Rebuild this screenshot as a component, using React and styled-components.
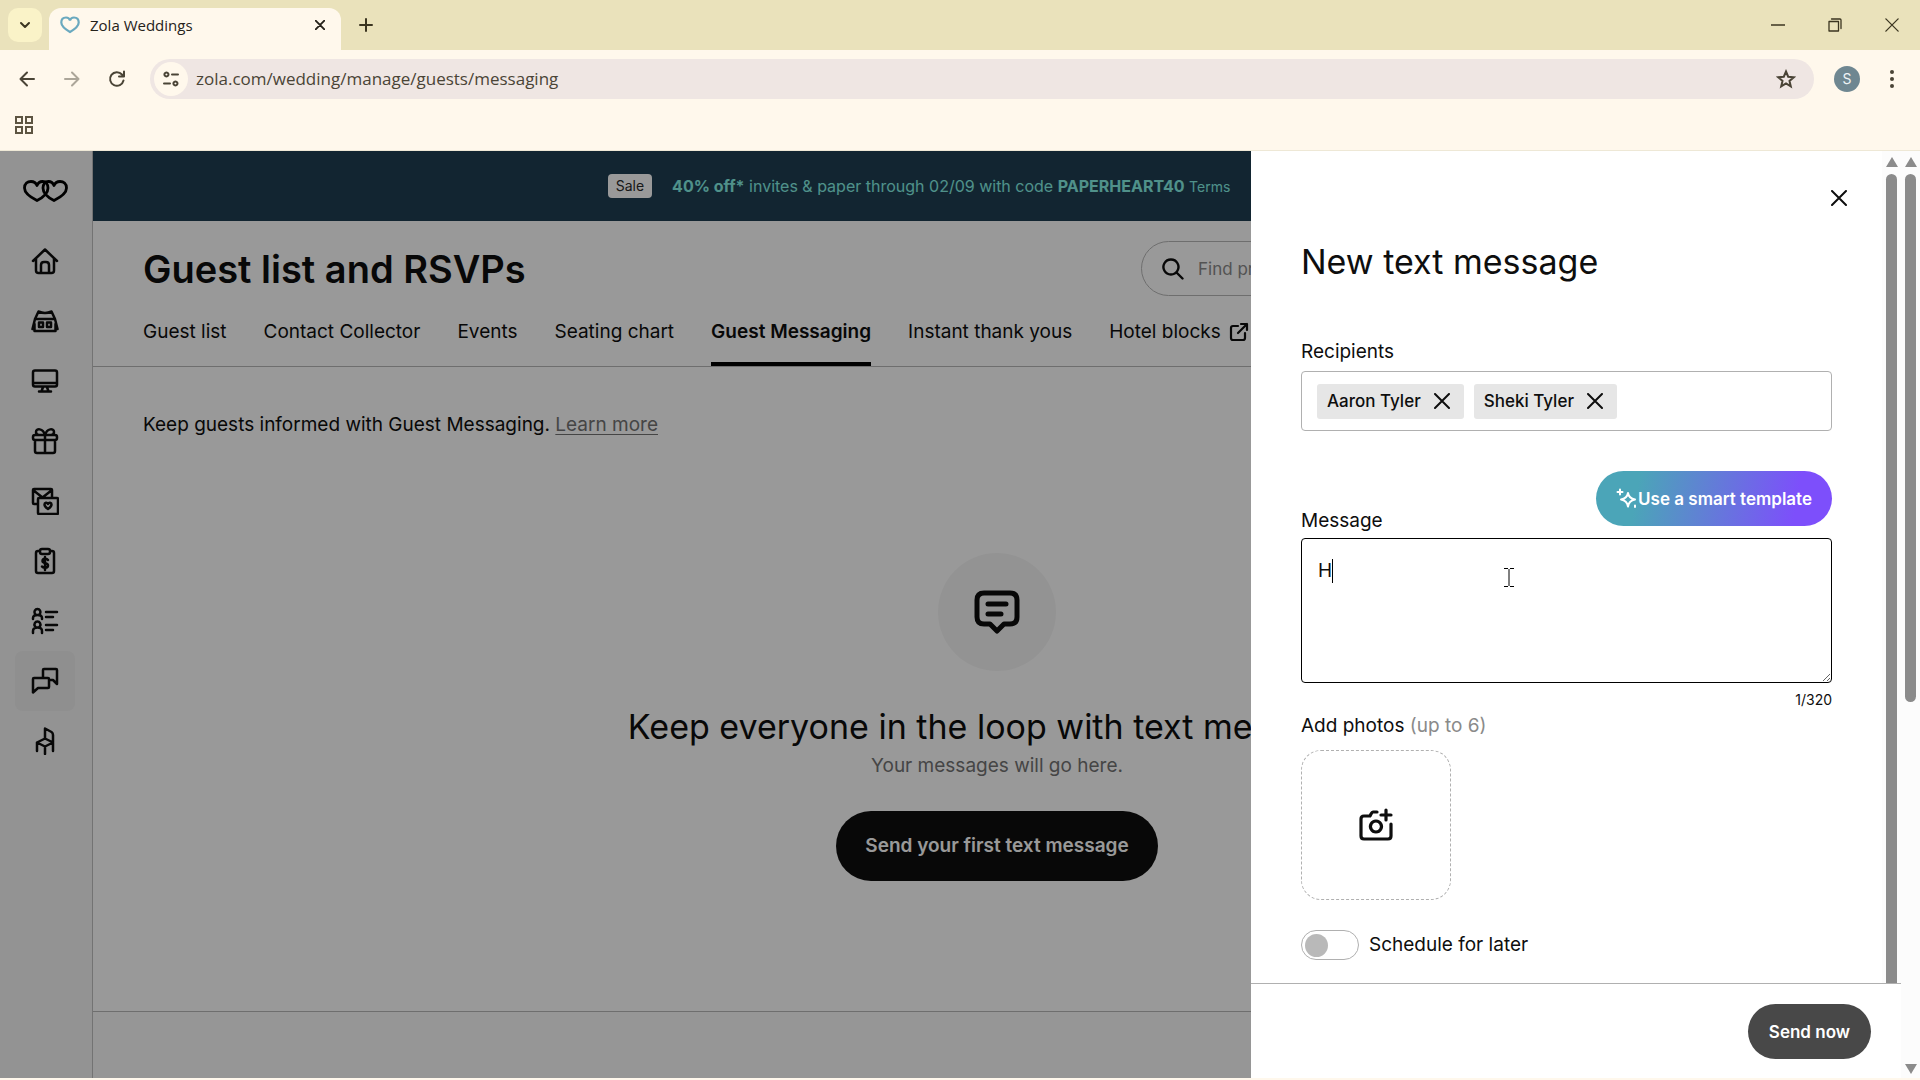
import React, { useState } from "react";
import styled, { createGlobalStyle, css } from "styled-components";

const GlobalStyle = createGlobalStyle`
  * {
    box-sizing: border-box;
  }
  body {
    margin: 0;
    color: #0e0e0e;
    font-family: Inter, "Liberation Sans", sans-serif;
    font-size: 19px;
    line-height: 28px;
  }
  button, input, textarea {
    font: inherit;
    color: inherit;
  }
  button {
    border: 0;
    padding: 0;
    background: none;
    cursor: pointer;
  }
  a {
    color: inherit;
    text-decoration: none;
  }
  h1, h2, p {
    margin: 0;
  }
  svg {
    display: block;
    flex: none;
  }
`;

/* Browser window */

const Window = styled.div`
  display: flex;
  flex-direction: column;
  height: 100vh;
  padding-bottom: 2px;
  background: #fff8ec;
  overflow: hidden;
`;

const TabStrip = styled.header`
  display: flex;
  align-items: flex-end;
  height: 50px;
  padding-left: 8px;
  background: #eae2bb;
  color: #3b3520;
`;

const TabSearch = styled.button`
  display: grid;
  place-items: center;
  width: 34px;
  height: 34px;
  margin: 0 7px 8px 0;
  border-radius: 10px;
  background: #faf3c8;
`;

const Tab = styled.div`
  display: flex;
  align-items: center;
  gap: 10px;
  width: 292px;
  height: 42px;
  padding: 0 16px 8px 11px;
  border-radius: 12px 12px 0 0;
  background: #fff8ec;
  color: #25221a;
  font-family: "Open Sans", sans-serif;
  font-size: 15px;
  line-height: 20px;

  span {
    flex: 1;
  }
`;

const NewTab = styled.button`
  display: grid;
  place-items: center;
  width: 34px;
  height: 50px;
  margin-left: 8px;
`;

const WindowControls = styled.div`
  display: flex;
  height: 50px;
  margin-left: auto;

  button {
    display: grid;
    place-items: center;
    width: 57px;
    height: 50px;
  }
`;

const Toolbar = styled.div`
  display: flex;
  align-items: center;
  height: 58px;
  padding: 0 14px 0 13px;
  color: #4a4436;
`;

const ToolButton = styled.button`
  display: grid;
  place-items: center;
  width: 28px;
  height: 28px;
  margin-right: 17px;
  opacity: ${(props) => (props.disabled ? 0.45 : 1)};
`;

const AddressBar = styled.div`
  display: flex;
  align-items: center;
  flex: 1;
  height: 40px;
  margin: 0 20px 0 2px;
  padding: 0 18px 0 4px;
  border-radius: 20px;
  background: #efe6e3;

  input {
    flex: 1;
    margin-left: 8px;
    padding: 0;
    border: 0;
    outline: 0;
    background: none;
    font-family: "Open Sans", sans-serif;
    font-size: 17px;
    line-height: 24px;
  }
`;

const SiteInfo = styled.button`
  display: grid;
  place-items: center;
  width: 34px;
  height: 34px;
  border-radius: 50%;
  background: #fff8ec;
`;

const Avatar = styled.button`
  width: 26px;
  height: 26px;
  margin-right: 18px;
  border-radius: 50%;
  background: #6f8791;
  color: #eef3f5;
  font-size: 14px;
  line-height: 26px;
`;

const Bookmarks = styled.div`
  display: flex;
  align-items: center;
  height: 43px;
  padding: 0 14px 8px;
  border-bottom: 1px solid #eee8d6;
  color: #5d5542;
`;

const Viewport = styled.div`
  position: relative;
  display: flex;
  flex: 1;
  min-height: 0;
  background: #fff;
`;

/* Scrollbar */

const ScrollTrack = styled.div`
  display: flex;
  flex-direction: column;
  align-items: center;
  width: 19px;
  background: #fcfcfc;
`;

const ScrollArrow = styled.div`
  margin: ${(props) => (props.$down ? "auto 0 4px" : "6px 0 7px")};
  border: 6px solid transparent;
  border-top: ${(props) => (props.$down ? "10px solid #8b8b8b" : "0")};
  border-bottom: ${(props) => (props.$down ? "0" : "10px solid #8b8b8b")};
`;

const ScrollThumb = styled.div`
  width: 11px;
  flex: ${(props) => (props.$full ? "1" : "0 1 57%")};
  border-radius: ${(props) => (props.$full ? "6px 6px 0 0" : "6px")};
  background: #8b8b8b;
`;

/* Page */

const Page = styled.div`
  position: relative;
  display: flex;
  flex: 1;
  min-width: 0;
`;

const Sidebar = styled.nav`
  display: flex;
  flex-direction: column;
  align-items: center;
  width: 93px;
  padding: 28px 2px 0 0;
  border-right: 1px solid #c0c0c0;
  background: #f5f5f5;
`;

const LogoLink = styled.a`
  margin-bottom: 28px;
`;

const SideLink = styled.a`
  display: grid;
  place-items: center;
  width: 60px;
  height: 60px;
  border-radius: 8px;
  background: ${(props) => (props.$active ? "#eeeeee" : "none")};
`;

const Main = styled.main`
  display: flex;
  flex-direction: column;
  flex: 1;
  min-width: 0;
  background: #fff;
`;

const Banner = styled.div`
  display: flex;
  align-items: center;
  justify-content: center;
  gap: 20px;
  height: 70px;
  padding-right: 156px;
  background: #1e3e52;
  color: #86f2e6;
  font-size: 16px;
  line-height: 24px;
  white-space: nowrap;

  a {
    font-size: 14px;
  }
`;

const SaleTag = styled.span`
  padding: 0 8px;
  border-radius: 4px;
  background: #fff;
  color: #2a2a2a;
  font-size: 14px;
`;

const PageHeader = styled.div`
  display: flex;
  align-items: center;
  justify-content: space-between;
  padding: 20px 50px 0;
`;

const PageTitle = styled.h1`
  font-size: 38px;
  font-weight: 600;
  line-height: 54px;
  white-space: nowrap;
`;

const SearchBox = styled.label`
  display: flex;
  align-items: center;
  gap: 14px;
  flex: 0 1 710px;
  height: 55px;
  padding: 0 20px;
  border: 1px solid #b8b8b8;
  border-radius: 28px;

  input {
    flex: 1;
    min-width: 0;
    padding: 0;
    border: 0;
    background: none;
    font-size: 17px;
  }
  input::placeholder {
    color: #8a8a8a;
    opacity: 1;
  }
`;

const SubNav = styled.nav`
  display: flex;
  gap: 37px;
  padding: 0 50px;
  border-bottom: 1px solid #b8b8b8;
  white-space: nowrap;
`;

const SubNavLink = styled.a`
  display: flex;
  align-items: center;
  gap: 8px;
  height: 70px;
  padding-top: 6px;
  border-bottom: 4px solid transparent;
  ${(props) =>
    props.$active &&
    css`
      border-color: #000;
      font-weight: 600;
    `}
`;

const Intro = styled.p`
  padding: 44px 50px 0;

  a {
    color: #747474;
    text-decoration: underline;
    text-underline-offset: 3px;
  }
`;

const EmptyState = styled.section`
  display: flex;
  flex-direction: column;
  align-items: center;
  flex: 1;
  padding-top: 114px;
  text-align: center;

  h2 {
    margin-top: 31px;
    font-size: 34px;
    font-weight: 400;
    line-height: 50px;
    white-space: nowrap;
  }
  p {
    color: #747474;
  }
`;

const EmptyIcon = styled.div`
  display: grid;
  place-items: center;
  width: 118px;
  height: 118px;
  border-radius: 50%;
  background: #f6f6f6;
`;

const FirstMessageButton = styled.button`
  height: 70px;
  margin-top: 31px;
  padding: 0 29px;
  border-radius: 35px;
  background: #0e0e0e;
  color: #fff;
  font-weight: 600;
`;

const PageFooter = styled.footer`
  height: 67px;
  border-top: 1px solid #b8b8b8;
  background: #fafafa;
`;

const Backdrop = styled.div`
  position: absolute;
  inset: 0;
  background: rgba(0, 0, 0, 0.4);
`;

/* Drawer */

const Drawer = styled.aside`
  position: absolute;
  top: 0;
  right: 0;
  bottom: 0;
  display: flex;
  flex-direction: column;
  width: 650px;
  max-width: 100%;
  background: #fff;
`;

const DrawerScroll = styled.div`
  display: flex;
  flex: 1;
  min-height: 0;
`;

const Form = styled.form`
  display: flex;
  flex-direction: column;
  flex: 1;
  min-width: 0;
  padding: 33px 50px 0;
  overflow: hidden;

  h2 {
    margin: 30px 0 56px;
    font-size: 34px;
    font-weight: 400;
    line-height: 40px;
  }
`;

const CloseButton = styled.button`
  display: grid;
  place-items: center;
  align-self: flex-end;
  width: 30px;
  height: 28px;
  margin-right: -22px;
`;

const Label = styled.label`
  line-height: 28px;

  span {
    color: #8a8a8a;
  }
`;

const RecipientField = styled.div`
  display: flex;
  align-items: center;
  gap: 10px;
  height: 60px;
  margin-top: 5px;
  padding: 0 15px;
  border: 1px solid #b0b0b0;
  border-radius: 4px;

  input {
    flex: 1;
    min-width: 0;
    border: 0;
    outline: 0;
  }
`;

const Chip = styled.span`
  display: flex;
  align-items: center;
  gap: 13px;
  height: 35px;
  padding: 0 14px 0 10px;
  border-radius: 3px;
  background: #e6e6e6;
  font-size: 17px;
  font-weight: 500;
  white-space: nowrap;
`;

const MessageHead = styled.div`
  display: flex;
  align-items: flex-end;
  justify-content: space-between;
  margin-top: 40px;

  ${Label} {
    margin-bottom: -9px;
  }
`;

const TemplateButton = styled.button`
  display: flex;
  align-items: center;
  gap: 1px;
  height: 55px;
  padding: 0 20px;
  border-radius: 28px;
  background: linear-gradient(100deg, #4ba5b8 18%, #7d4ffb 84%);
  color: #fff;
  font-size: 17px;
  font-weight: 600;
`;

const MessageField = styled.div`
  position: relative;
  display: flex;
  margin-top: 12px;

  textarea {
    width: 100%;
    height: 145px;
    padding: 18px 16px;
    border: 1px solid #000;
    border-radius: 4px;
    outline: 0;
    caret-color: transparent;
    resize: vertical;
  }
`;

const Caret = styled.span`
  position: absolute;
  top: 21px;
  left: 31px;
  width: 1px;
  height: 24px;
  background: #000;
`;

const Pointer = styled.svg`
  position: absolute;
  top: 30px;
  left: 203px;
`;

const Counter = styled.div`
  margin: 7px 0 2px;
  font-size: 14px;
  line-height: 20px;
  text-align: right;
`;

const PhotoButton = styled.button`
  display: grid;
  place-items: center;
  width: 150px;
  height: 150px;
  margin-top: 10px;
  border: 1px dashed #b0b0b0;
  border-radius: 20px;
`;

const ToggleRow = styled.div`
  display: flex;
  align-items: center;
  gap: 10px;
  margin-top: 30px;
`;

const Toggle = styled.input`
  appearance: none;
  display: flex;
  align-items: center;
  width: 58px;
  height: 30px;
  margin: 0;
  padding: 0 3px;
  border: 1px solid #b0b0b0;
  border-radius: 15px;

  &::before {
    content: "";
    width: 23px;
    height: 23px;
    border-radius: 50%;
    background: #b9b9b9;
  }
  &:checked {
    justify-content: flex-end;
  }
`;

const DrawerFooter = styled.div`
  display: flex;
  justify-content: flex-end;
  padding: 20px 30px 19px;
  border-top: 1px solid #b0b0b0;
`;

const SendButton = styled.button`
  height: 55px;
  padding: 0 21px;
  border-radius: 28px;
  background: #484848;
  color: #fff;
  font-size: 17px;
  font-weight: 600;
`;

const Icon = ({ size = 28, box = 28, width = 2, children }) => (
  <svg
    width={size}
    height={size}
    viewBox={`0 0 ${box} ${box}`}
    fill="none"
    stroke="currentColor"
    strokeWidth={width}
    strokeLinecap="round"
    strokeLinejoin="round"
    aria-hidden="true"
  >
    {children}
  </svg>
);

const CrossIcon = ({ size = 16, width = 2 }) => (
  <Icon size={size} box={16} width={width}>
    <path d="M1 1l14 14M15 1L1 15" />
  </Icon>
);

const HeartsLogo = () => (
  <svg width="46" height="24" viewBox="0 0 46 24" fill="none" stroke="#000" strokeWidth="2.8" strokeLinejoin="round">
    <path d="M15 21.500C8 18 2.500 14.500 2.500 9C2.500 4.500 5.500 2.500 9 2.500C12 2.500 14 4 15 6.500C16 4 18 2.500 20.500 2.500C24 2.500 26 5.500 26 9C26 14.500 22 18 15 21.500Z" />
    <path d="M32 21.500C25 18 21 14.500 21 9C21 5.500 23 2.500 26.500 2.500C29 2.500 31 4 32 6.500C33 4 35 2.500 38 2.500C41.500 2.500 44.500 4.500 44.500 9C44.500 14.500 39 18 32 21.500Z" />
  </svg>
);

const sideLinks = [
  {
    name: "Home",
    icon: <path d="M2 14L14 2.500L26 14M5 11.500V23.500Q5 26 7.500 26H20.500Q23 26 23 23.500V11.500M10 26V18Q10 15 13 15H15Q18 15 18 18V26" />,
  },
  {
    name: "Venues",
    icon: <path d="M7.500 4.500Q14 7.500 20.500 4.500M7.500 4.500L4 12H24L20.500 4.500M4 12L1.500 22M24 12L26.500 22M3.500 17V24H24.500V17M8 15.500H12V20H8ZM16 15.500H20V20H16Z" />,
  },
  {
    name: "Website",
    icon: <path d="M4 3.500H24Q26 3.500 26 5.500V17.500Q26 19.500 24 19.500H4Q2 19.500 2 17.500V5.500Q2 3.500 4 3.500ZM2 16H26M12 20L10.500 24.500M16 20L17.500 24.500M8 24.500H20" />,
  },
  {
    name: "Registry",
    icon: <path d="M4 8H24Q26 8 26 10V11Q26 13 24 13H4Q2 13 2 11V10Q2 8 4 8ZM4 13V24Q4 26 6 26H22Q24 26 24 24V13M14 8V26M14 8C12 1 5 1 5 5C5 7 6 8 8 8M14 8C16 1 23 1 23 5C23 7 22 8 20 8" />,
  },
  {
    name: "Invites",
    icon: <path d="M7 17H3Q2 17 2 16V3Q2 2 3 2H20Q21 2 21 3V10M2 3L11.500 10.500L21 3M8 11H26Q27 11 27 12V26Q27 27 26 27H8Q7 27 7 26V12Q7 11 8 11ZM17 22C14 20 13.500 19 13.500 17.500C13.500 15.500 16 15 17 17C18 15 20.500 15.500 20.500 17.500C20.500 19 20 20 17 22Z" />,
  },
  {
    name: "Checklist",
    icon: <path d="M9 4H7Q5 4 5 6V24Q5 26 7 26H21Q23 26 23 24V6Q23 4 21 4H19M11 2H17Q19 2 19 4V5Q19 7 17 7H11Q9 7 9 5V4Q9 2 11 2ZM17 13C16 11.500 11.500 11 11.500 14C11.500 17 17 15.500 17 18.500C17 21.500 12 21 11 19.500M14 10V23" />,
  },
  {
    name: "Guests",
    icon: <path d="M6.500 2A3 3 0 1 1 6.400 2ZM2 12V11Q2 8 6.500 8Q11 8 11 11V12M6.500 14.500A3 3 0 1 1 6.400 14.500ZM2 26V24Q2 20.500 6.500 20.500Q11 20.500 11 24V26M15 5H26M15 10H22M15 18H26M15 23H22" />,
  },
  {
    name: "Messaging",
    active: true,
    icon: <path d="M12 10V3Q12 2 13 2H25Q26 2 26 3V17L22 13H18M3 11H17Q18 11 18 12V20Q18 21 17 21H7L2 25.500V12Q2 11 3 11Z" />,
  },
  {
    name: "Seating",
    icon: <path d="M14 11.500V1.500L20.500 5Q22 6 22 8V24M6 15.500L14 11.500L22 15.500L14 19.500ZM6 15.500V24M14 19.500V27" />,
  },
];

const pageLinks = ["Guest list", "Contact Collector", "Events", "Seating chart", "Guest Messaging", "Instant thank yous", "Hotel blocks"];

const Chrome = () => (
  <>
    <TabStrip>
      <TabSearch aria-label="Search tabs">
        <Icon size={12} box={12}>
          <path d="M2 4l4 4 4-4" />
        </Icon>
      </TabSearch>
      <Tab>
        <svg width="20" height="18" viewBox="0 0 20 18" fill="none" stroke="#6aa9bf" strokeWidth="2.2">
          <path d="M10 16C4 12.500 1.300 10 1.300 6.500C1.300 3 3.500 1.500 6 1.500C8 1.500 9.500 2.500 10 4.500C10.500 2.500 12 1.500 14 1.500C16.500 1.500 18.700 3 18.700 6.500C18.700 10 16 12.500 10 16Z" />
        </svg>
        <span>Zola Weddings</span>
        <button aria-label="Close tab">
          <CrossIcon size={10} width={3} />
        </button>
      </Tab>
      <NewTab aria-label="New tab">
        <Icon size={14} box={14}>
          <path d="M7 1v12M1 7h12" />
        </Icon>
      </NewTab>
      <WindowControls>
        <button aria-label="Minimize">
          <Icon size={14} box={14} width={1.5}>
            <path d="M0 7h14" />
          </Icon>
        </button>
        <button aria-label="Restore">
          <Icon size={14} box={14} width={1.3}>
            <path d="M1 3.500h9.500v9.500H1zM3.500 1H12q1 0 1 1v8.500" />
          </Icon>
        </button>
        <button aria-label="Close">
          <CrossIcon size={14} width={1.5} />
        </button>
      </WindowControls>
    </TabStrip>
    <Toolbar>
      <ToolButton aria-label="Back">
        <Icon size={16} box={16}>
          <path d="M15 8H1.500M8 1.500L1.500 8L8 14.500" />
        </Icon>
      </ToolButton>
      <ToolButton aria-label="Forward" disabled>
        <Icon size={16} box={16}>
          <path d="M1 8H14.500M8 1.500L14.500 8L8 14.500" />
        </Icon>
      </ToolButton>
      <ToolButton aria-label="Reload">
        <Icon size={18} box={18}>
          <path d="M15.500 10.500A6.800 6.800 0 1 1 14 4.500L16 6.500M16 1.500V6.500H11" />
        </Icon>
      </ToolButton>
      <AddressBar>
        <SiteInfo aria-label="Site information">
          <Icon size={16} box={16}>
            <path d="M3.500 1.500A2 2 0 1 1 3.400 1.500ZM9 3.500H15M1 12.500H7M12.500 10.500A2 2 0 1 1 12.400 10.500Z" />
          </Icon>
        </SiteInfo>
        <input aria-label="Address" defaultValue="zola.com/wedding/manage/guests/messaging" />
        <button aria-label="Bookmark this page">
          <Icon size={20} box={20}>
            <path strokeLinejoin="miter" d="M10 2.500L12.200 7.700L17.800 8.200L13.500 11.900L14.800 17.400L10 14.500L5.200 17.400L6.500 11.900L2.200 8.200L7.800 7.700Z" />
          </Icon>
        </button>
      </AddressBar>
      <Avatar aria-label="Profile">S</Avatar>
      <button aria-label="Menu">
        <svg width="28" height="20" viewBox="0 0 28 20" fill="currentColor">
          <circle cx="14" cy="3" r="2" />
          <circle cx="14" cy="10" r="2" />
          <circle cx="14" cy="17" r="2" />
        </svg>
      </button>
    </Toolbar>
    <Bookmarks>
      <button aria-label="Apps">
        <Icon size={20} box={20}>
          <path strokeLinejoin="miter" d="M2 2h6v6H2zM12 2h6v6h-6zM2 12h6v6H2zM12 12h6v6h-6z" />
        </Icon>
      </button>
    </Bookmarks>
  </>
);

const MessageDrawer = () => {
  const [message, setMessage] = useState("H");
  const [recipients, setRecipients] = useState(["Aaron Tyler", "Sheki Tyler"]);

  return (
    <Drawer aria-label="New text message">
      <DrawerScroll>
        <Form>
          <CloseButton type="button" aria-label="Close">
            <CrossIcon />
          </CloseButton>
          <h2>New text message</h2>
          <Label htmlFor="recipients">Recipients</Label>
          <RecipientField>
            {recipients.map((name) => (
              <Chip key={name}>
                {name}
                <button
                  type="button"
                  aria-label={`Remove ${name}`}
                  onClick={() => setRecipients(recipients.filter((r) => r !== name))}
                >
                  <CrossIcon />
                </button>
              </Chip>
            ))}
            <input id="recipients" />
          </RecipientField>
          <MessageHead>
            <Label htmlFor="message">Message</Label>
            <TemplateButton type="button">
              <Icon size={21} box={21}>
                <path d="M12 5Q13 10.500 19 11.500Q13 12.500 12 18.500Q11 12.500 5 11.500Q11 10.500 12 5ZM4 1.500V6.500M1.500 4H6.500M19 17.500V19" />
              </Icon>
              Use a smart template
            </TemplateButton>
          </MessageHead>
          <MessageField>
            <textarea id="message" value={message} onChange={(e) => setMessage(e.target.value)} />
            {message.length === 1 && <Caret />}
            <Pointer width="10" height="19" viewBox="0 0 10 19" fill="none" stroke="#000">
              <path d="M0 .5H4M6 .5H10M5 1V18M0 18.500H4M6 18.500H10" />
            </Pointer>
          </MessageField>
          <Counter>{message.length}/320</Counter>
          <Label htmlFor="photos">
            Add photos <span>(up to 6)</span>
          </Label>
          <PhotoButton type="button" id="photos" aria-label="Add photos">
            <Icon size={36} box={36} width={3.2}>
              <path d="M19 5H15Q14 5 13 7L12 9H6Q3 9 3 12V29Q3 32 6 32H30Q33 32 33 29V17M18 14A5.500 5.500 0 1 1 17.900 14ZM28 3V13M23 8H33" />
            </Icon>
          </PhotoButton>
          <ToggleRow>
            <Toggle type="checkbox" role="switch" id="schedule" />
            <Label htmlFor="schedule">Schedule for later</Label>
          </ToggleRow>
        </Form>
        <ScrollTrack>
          <ScrollArrow />
          <ScrollThumb $full />
        </ScrollTrack>
      </DrawerScroll>
      <DrawerFooter>
        <SendButton>Send now</SendButton>
      </DrawerFooter>
    </Drawer>
  );
};

export default function App() {
  return (
    <Window>
      <GlobalStyle />
      <Chrome />
      <Viewport>
        <Page>
          <Sidebar>
            <LogoLink href="#" aria-label="Zola">
              <HeartsLogo />
            </LogoLink>
            {sideLinks.map((link) => (
              <SideLink key={link.name} href="#" aria-label={link.name} $active={link.active}>
                <Icon width={2.5}>{link.icon}</Icon>
              </SideLink>
            ))}
          </Sidebar>
          <Main>
            <Banner>
              <SaleTag>Sale</SaleTag>
              <span>
                <b>40% off*</b> invites &amp; paper through 02/09 with code <b>PAPERHEART40</b> <a href="#">Terms</a>
              </span>
            </Banner>
            <PageHeader>
              <PageTitle>Guest list and RSVPs</PageTitle>
              <SearchBox>
                <Icon size={22} box={22} width={2.4}>
                  <path d="M9 1.500A7.500 7.500 0 1 1 8.900 1.500ZM14.500 14.500L20.500 20.500" />
                </Icon>
                <input type="search" placeholder="Find products" aria-label="Find products" />
              </SearchBox>
            </PageHeader>
            <SubNav>
              {pageLinks.map((name) => (
                <SubNavLink key={name} href="#" $active={name === "Guest Messaging"}>
                  {name}
                  {name === "Hotel blocks" && (
                    <Icon size={20} box={20} width={2.2}>
                      <path d="M9 4H4Q2 4 2 6V16Q2 18 4 18H14Q16 18 16 16V11M12 2H18V8M18 2L9 11" />
                    </Icon>
                  )}
                </SubNavLink>
              ))}
            </SubNav>
            <Intro>
              Keep guests informed with Guest Messaging. <a href="#">Learn more</a>
            </Intro>
            <EmptyState>
              <EmptyIcon>
                <Icon size={48} box={48} width={5}>
                  <path d="M11 5H37Q44 5 44 12V29Q44 36 37 36H31L24 43L17 36H11Q4 36 4 29V12Q4 5 11 5ZM15 16H33M15 26H28" />
                </Icon>
              </EmptyIcon>
              <h2>Keep everyone in the loop with text messages</h2>
              <p>Your messages will go here.</p>
              <FirstMessageButton>Send your first text message</FirstMessageButton>
            </EmptyState>
            <PageFooter />
          </Main>
          <Backdrop />
          <MessageDrawer />
        </Page>
        <ScrollTrack>
          <ScrollArrow />
          <ScrollThumb />
          <ScrollArrow $down />
        </ScrollTrack>
      </Viewport>
    </Window>
  );
}
